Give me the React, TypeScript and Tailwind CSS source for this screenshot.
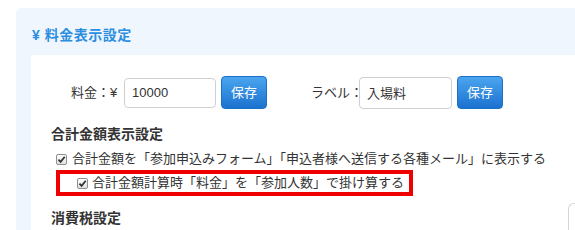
import React from 'react';

const font = '"Liberation Sans", "Noto Sans CJK JP", sans-serif';

function Check() {
    return (
        <span className="inline-flex h-[11px] w-[11px] shrink-0 items-center justify-center rounded-[2px] border border-[#8f8f8f] bg-gradient-to-b from-white to-[#e2e2e2]">
            <svg viewBox="0 0 10 10" className="h-[9px] w-[9px]">
                <path d="M1.6 5.2 L4 7.6 L8.6 2" fill="none" stroke="#333" strokeWidth="2" />
            </svg>
        </span>
    );
}

function SaveButton() {
    return (
        <button className="h-[33px] w-[46px] shrink-0 rounded-[4px] border border-[#1c6fc6] bg-gradient-to-b from-[#4ba5ee] to-[#1a72cf] text-[13px] text-white">
            保存
        </button>
    );
}

export default function App() {
    return (
        <div className="relative h-[230px] w-[575px] overflow-hidden bg-white pl-[16px] pt-[8px] text-[#333]" style={{ fontFamily: font }}>
            <div className="flex h-[240px] flex-col rounded-tl-[6px] bg-[#eff6fe]">
                <div className="flex h-[47px] items-start pl-[16px] pt-[17px]">
                    <h1 className="text-[14px] font-bold leading-[20px] tracking-[0.5px] text-[#2b8ede]">¥ 料金表示設定</h1>
                </div>
                <div className="ml-[15px] flex-1 bg-white">
                    <div className="mt-[21px] flex h-[33px] items-center whitespace-nowrap pl-[40px] text-[13px]">
                        <span className="w-[53px] shrink-0">料金：¥</span>
                        <input
                            defaultValue="10000"
                            className="h-[30px] w-[92px] shrink-0 rounded-[4px] border border-[#cfcfcf] px-[7px] text-[13px] text-[#333] outline-none"
                        />
                        <span className="w-[5px] shrink-0" />
                        <SaveButton />
                        <span className="w-[44px] shrink-0" />
                        <span className="w-[48px] shrink-0">ラベル：</span>
                        <input
                            defaultValue="入場料"
                            className="h-[32px] w-[93px] shrink-0 rounded-[4px] border border-[#cfcfcf] px-[7px] text-[13px] text-[#333] outline-none"
                        />
                        <span className="w-[5px] shrink-0" />
                        <SaveButton />
                    </div>
                    <div className="pl-[20px] pt-[15px]">
                        <h2 className="text-[14px] font-bold leading-[20px]">合計金額表示設定</h2>
                        <div className="mt-[4px] flex h-[22px] items-center gap-[5px] whitespace-nowrap pl-[5px] text-[13px]">
                            <Check />
                            <span>合計金額を「参加申込みフォーム」「申込者様へ送信する各種メール」に表示する</span>
                        </div>
                        <div className="ml-[5px] flex h-[26px] w-[357px] items-center gap-[4px] whitespace-nowrap border-4 border-[#ee0000] pl-[17px] text-[13px]">
                            <Check />
                            <span>合計金額計算時「料金」を「参加人数」で掛け算する</span>
                        </div>
                        <h2 className="mt-[12px] text-[14px] font-bold leading-[20px]">消費税設定</h2>
                    </div>
                </div>
            </div>
            <div className="absolute left-[568px] top-[203px] h-[40px] w-[30px] rounded-tl-[6px] border-l border-t border-[#d6d6d6]" />
        </div>
    );
}
